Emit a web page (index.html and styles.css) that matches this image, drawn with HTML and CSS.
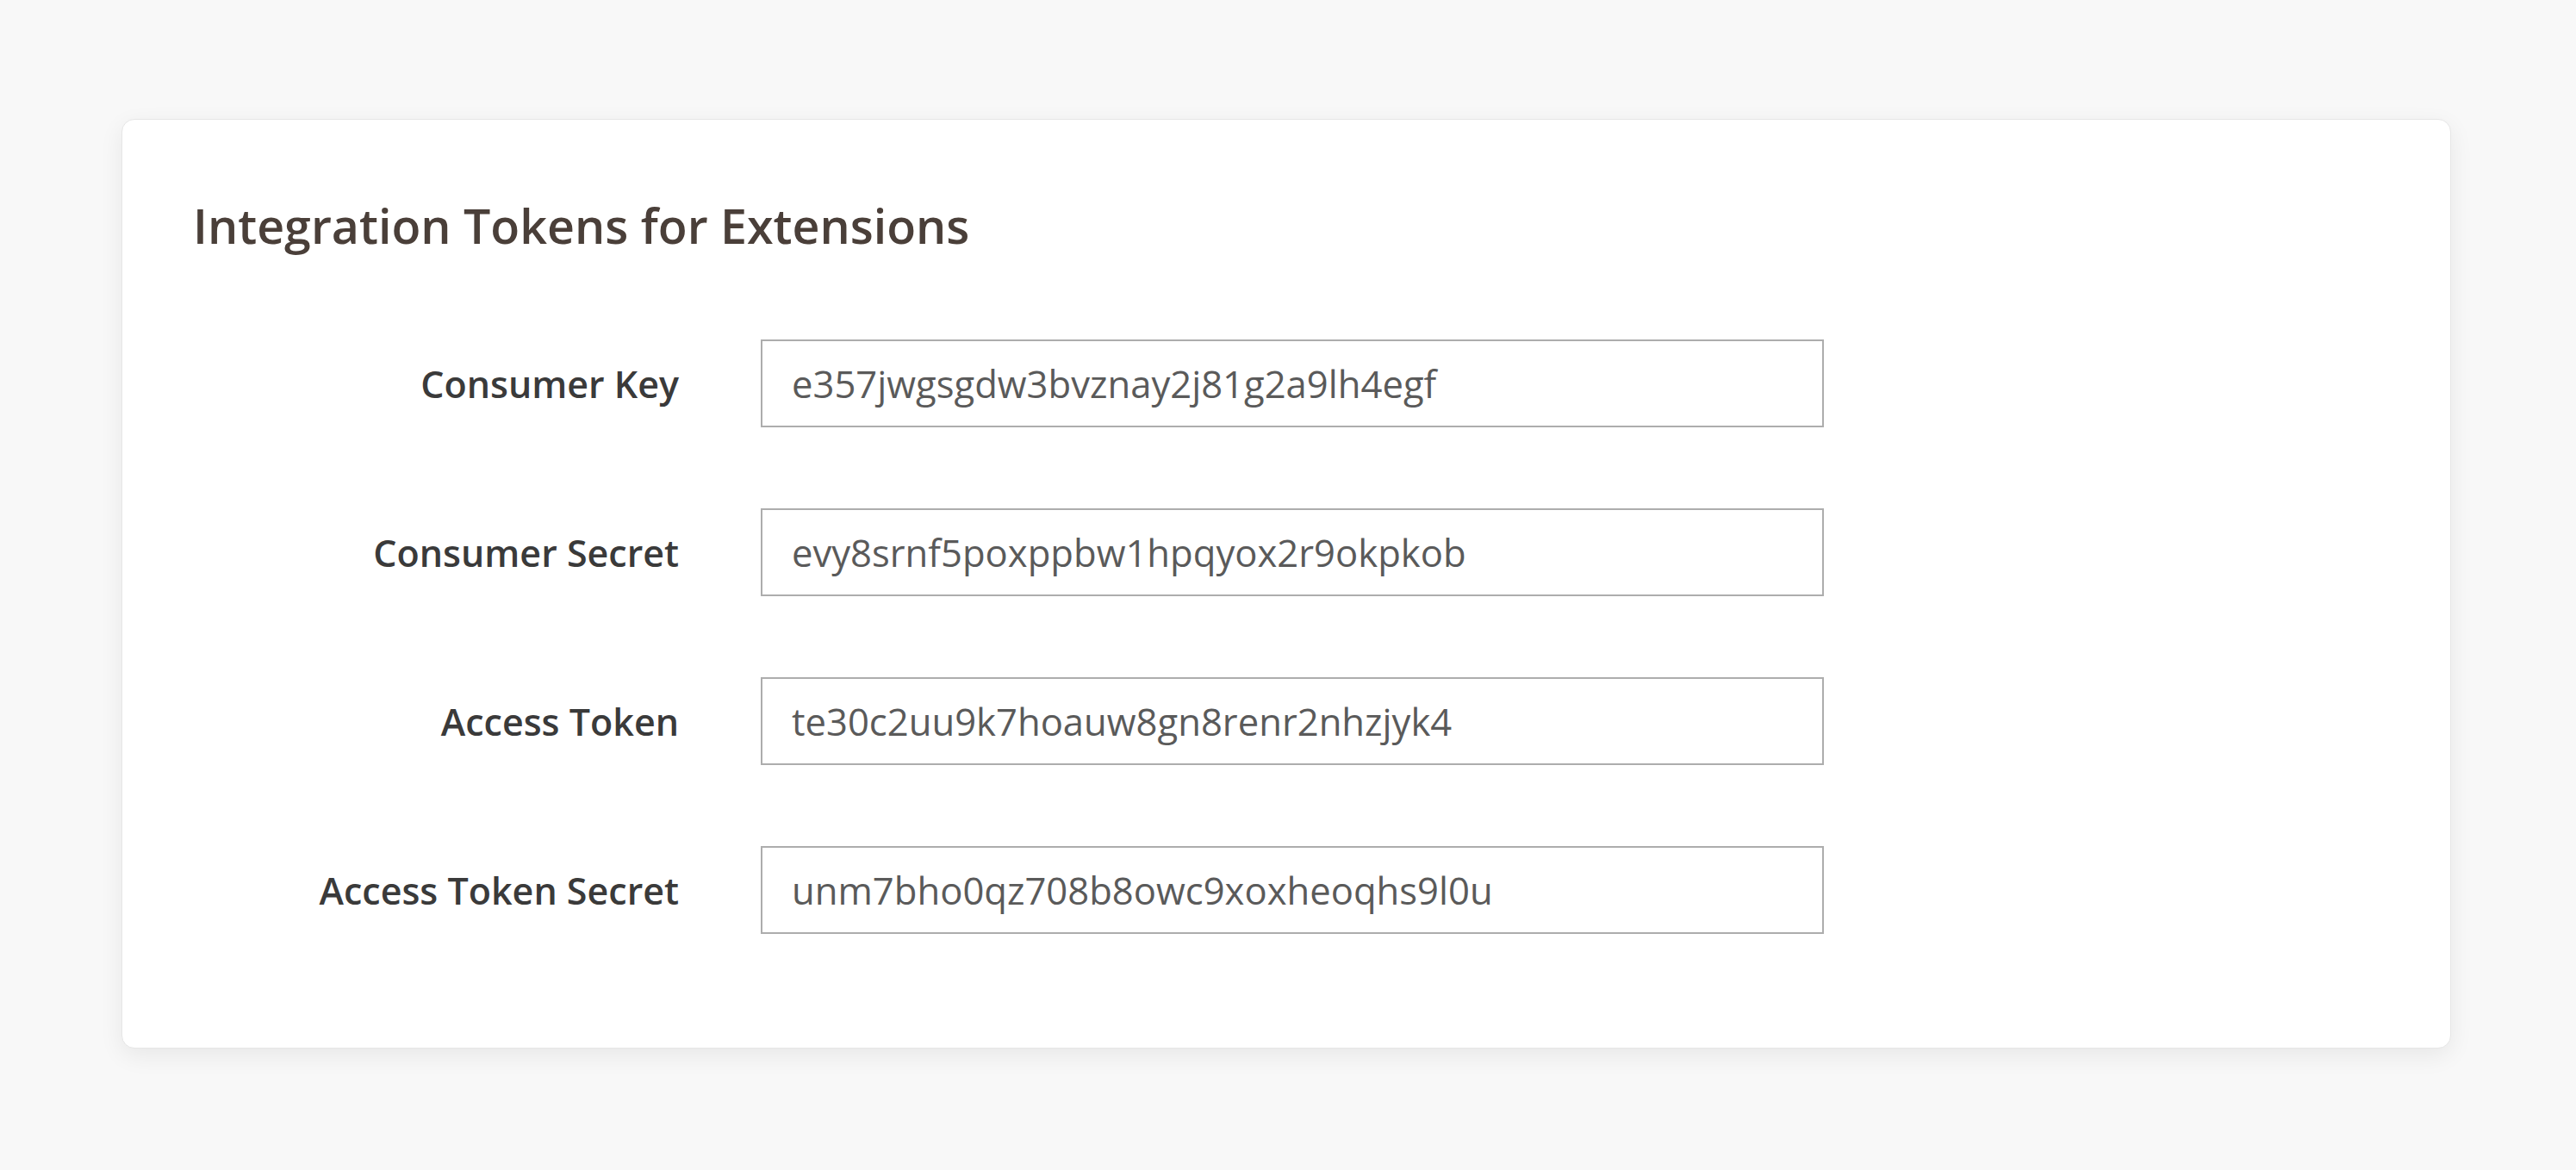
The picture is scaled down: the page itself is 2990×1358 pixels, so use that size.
FILE: index.html
```html
<!DOCTYPE html>
<html lang="en">
<head>
<meta charset="utf-8">
<title>Integration Tokens for Extensions</title>
<link rel="stylesheet" href="styles.css">
</head>
<body>
<main class="page">
  <section class="card">
    <h2 class="card-title">Integration Tokens for Extensions</h2>
    <div class="fields">
      <label class="field-label" for="ck">Consumer Key</label>
      <input class="field-input" id="ck" type="text" value="e357jwgsgdw3bvznay2j81g2a9lh4egf" readonly>
      <label class="field-label" for="cs">Consumer Secret</label>
      <input class="field-input" id="cs" type="text" value="evy8srnf5poxppbw1hpqyox2r9okpkob" readonly>
      <label class="field-label" for="at">Access Token</label>
      <input class="field-input" id="at" type="text" value="te30c2uu9k7hoauw8gn8renr2nhzjyk4" readonly>
      <label class="field-label" for="ats">Access Token Secret</label>
      <input class="field-input" id="ats" type="text" value="unm7bho0qz708b8owc9xoxheoqhs9l0u" readonly>
    </div>
  </section>
</main>
</body>
</html>
```
FILE: styles.css
```css
html, body {
  margin: 0;
  padding: 0;
  background: #f8f8f8;
}

body {
  font-family: "Open Sans", "Liberation Sans", sans-serif;
  min-height: 1358px;
}

.page {
  padding: 138px 145px 0 141px;
}

.card {
  box-sizing: border-box;
  width: 2704px;
  height: 1079px;
  background: #ffffff;
  border: 1px solid #e6e6e6;
  border-radius: 15px;
  box-shadow: 0 8px 28px rgba(0, 0, 0, 0.07);
  padding: 89px 82px 0 82px;
}

.card-title {
  margin: 0;
  font-size: 55.5px;
  font-weight: 600;
  line-height: 67px;
  color: #4a3f39;
}

.fields {
  margin-top: 99px;
  display: grid;
  grid-template-columns: 564px 1234px;
  column-gap: 95px;
  row-gap: 94px;
  align-items: center;
}

.field-label {
  text-align: right;
  font-size: 43px;
  font-weight: 600;
  color: #3a3a3a;
}

.field-input {
  box-sizing: border-box;
  width: 1234px;
  height: 102px;
  margin: 0;
  padding: 0 34px;
  border: 2px solid #adadad;
  border-radius: 0;
  background: #ffffff;
  font-family: "Open Sans", "Liberation Sans", sans-serif;
  font-size: 43.6px;
  color: #5a5a5a;
  outline: none;
}
```
